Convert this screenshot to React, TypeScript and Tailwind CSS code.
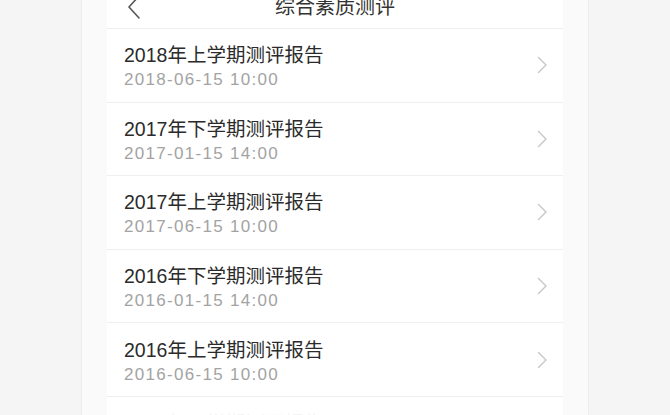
const reports = [
  { title: "2018年上学期测评报告", time: "2018-06-15 10:00" },
  { title: "2017年下学期测评报告", time: "2017-01-15 14:00" },
  { title: "2017年上学期测评报告", time: "2017-06-15 10:00" },
  { title: "2016年下学期测评报告", time: "2016-01-15 14:00" },
  { title: "2016年上学期测评报告", time: "2016-06-15 10:00" },
  { title: "2015年下学期测评报告", time: "2015-01-15 14:00" },
];

const font = { fontFamily: '"Liberation Sans", "Noto Sans CJK SC", sans-serif' };

function ReportRow({ title, time, faded }: { title: string; time: string; faded?: boolean }) {
  return (
    <div className="h-[73.6px] shrink-0 border-b border-[#efefef] flex items-center pl-[17px] pr-[15px]">
      <div className={"flex-1 flex flex-col pt-[4px] " + (faded ? "opacity-5" : "")}>
        <div className="text-[19.5px] leading-[24px] text-[#2b2b2b]">{title}</div>
        <div className="mt-[2px] text-[17px] leading-[22px] tracking-[1.3px] text-[#a3a3a3]">{time}</div>
      </div>
      <svg width="11" height="18" viewBox="0 0 11 18" fill="none">
        <path d="M1.5 1.5 L9 9 L1.5 16.5" stroke="#c6c6c6" strokeWidth="1.4" strokeLinecap="round" strokeLinejoin="round" />
      </svg>
    </div>
  );
}

export default function App() {
  return (
    <div className="h-[415px] w-full overflow-hidden bg-[#f5f5f5] flex justify-center" style={font}>
      <div className="w-[506px] h-full bg-[#fafafa] shadow-[0_0_2px_rgba(0,0,0,0.1)] px-[25px]">
        <div className="h-full bg-white flex flex-col overflow-hidden">
          <div className="relative h-[44px] -mt-[15px] shrink-0 flex items-center justify-center border-b border-[#efefef]">
            <svg className="absolute left-[20px]" width="14" height="24" viewBox="0 0 14 24" fill="none">
              <path d="M12 1 L2 12 L12 23" stroke="#555" strokeWidth="1.6" strokeLinecap="round" strokeLinejoin="round" />
            </svg>
            <span className="text-[20px] text-[#333]">综合素质测评</span>
          </div>
          {reports.map((r, i) => (
            <ReportRow key={r.time} title={r.title} time={r.time} faded={i === 5} />
          ))}
        </div>
      </div>
    </div>
  );
}
